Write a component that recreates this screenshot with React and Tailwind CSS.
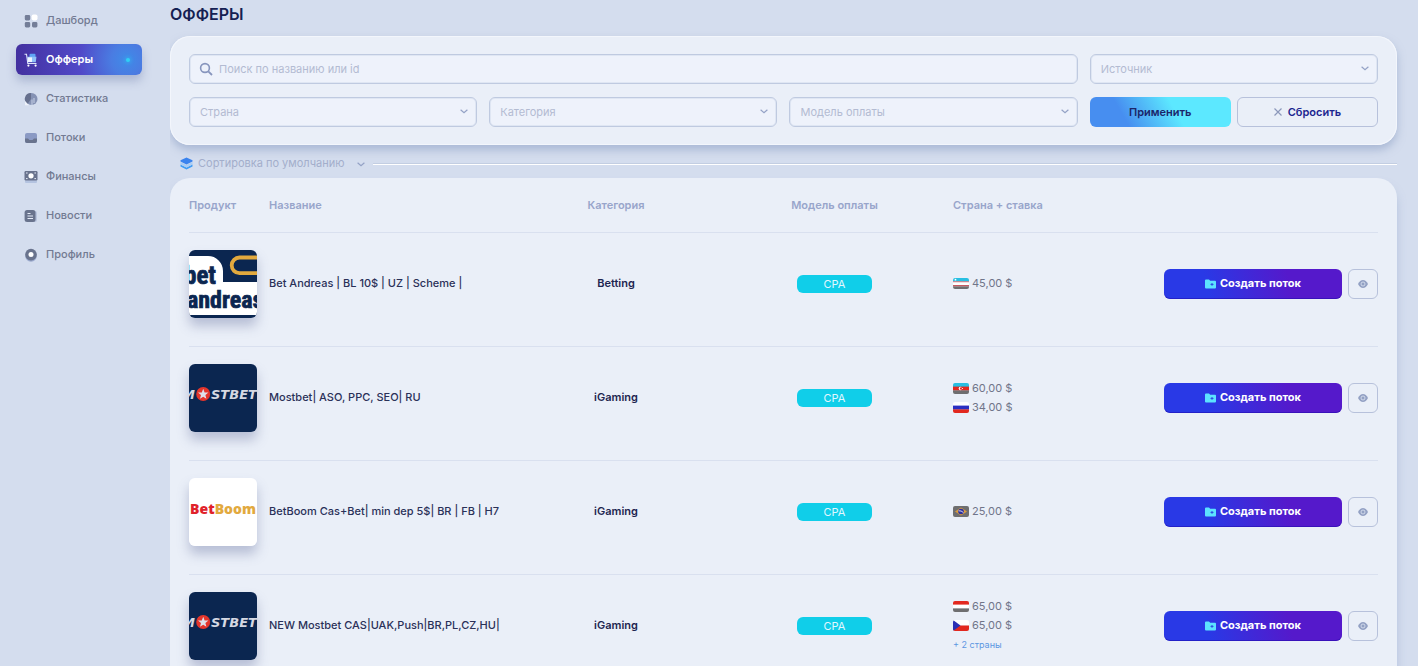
import React, { useState } from "react";

const menu = [
  { id: "dashboard", label: "Дашборд" },
  { id: "offers", label: "Офферы" },
  { id: "stats", label: "Статистика" },
  { id: "flows", label: "Потоки" },
  { id: "finance", label: "Финансы" },
  { id: "news", label: "Новости" },
  { id: "profile", label: "Профиль" },
];

const offers = [
  {
    id: 1,
    logo: "betandreas",
    name: "Bet Andreas | BL 10$ | UZ | Scheme |",
    category: "Betting",
    rates: [{ flag: "uz", price: "45,00 $" }],
  },
  {
    id: 2,
    logo: "mostbet",
    name: "Mostbet| ASO, PPC, SEO| RU",
    category: "iGaming",
    rates: [
      { flag: "az", price: "60,00 $" },
      { flag: "ru", price: "34,00 $" },
    ],
  },
  {
    id: 3,
    logo: "betboom",
    name: "BetBoom Cas+Bet| min dep 5$| BR | FB | H7",
    category: "iGaming",
    rates: [{ flag: "br", price: "25,00 $" }],
  },
  {
    id: 4,
    logo: "mostbet",
    name: "NEW Mostbet CAS|UAK,Push|BR,PL,CZ,HU|",
    category: "iGaming",
    rates: [
      { flag: "hu", price: "65,00 $" },
      { flag: "cz", price: "65,00 $" },
    ],
    more: "+ 2 страны",
  },
];

const MenuIcon = ({ id }) => {
  return (
    <svg viewBox="0 0 14 14" className="w-[14px] h-[14px] shrink-0" aria-hidden="true">
      {id === "dashboard" && (
        <>
          <rect x="0.8" y="1" width="5.4" height="5.4" rx="1.4" fill="#747e98" />
          <rect x="7.6" y="0.5" width="5.9" height="5.9" rx="1.8" fill="#fff" />
          <rect x="0.8" y="8" width="5.4" height="5.4" rx="1.4" fill="#747e98" />
          <rect x="8" y="8" width="5.4" height="5.4" rx="1.4" fill="#747e98" />
        </>
      )}
      {id === "offers" && (
        <>
          <path d="M0.5 1.2h2l1.3 9.3h8.7" fill="none" stroke="#dfe6fb" strokeWidth="1.1" />
          <rect x="5.5" y="0.8" width="6" height="5" rx="1" fill="#5fa4f5" />
          <path d="M3.3 3.8h9.2l-0.7 5.4H4z" fill="#8fc0f8" />
          <rect x="3.6" y="4.4" width="4.4" height="4.6" fill="#eef3ff" />
          <circle cx="4.4" cy="12.6" r="1.1" fill="#fff" />
          <circle cx="11.6" cy="12.6" r="1.1" fill="#fff" />
        </>
      )}
      {id === "stats" && (
        <>
          <circle cx="7.5" cy="7" r="6" fill="#8592b4" />
          <path d="M7 1v6l-3.5 5A6 6 0 0 1 7 1z" fill="#66708e" />
          <path d="M8 7.5V13M10 6v5" stroke="#c8d2e8" strokeWidth="1" />
          <path d="M1 9v4.2h4z" fill="#eef2fa" />
        </>
      )}
      {id === "flows" && (
        <>
          <rect x="1" y="2" width="12" height="10" rx="2" fill="#8b9ac4" />
          <path d="M1 7.5h3l1.5 1.5h3L10 7.5h3V10a2 2 0 0 1-2 2H3a2 2 0 0 1-2-2z" fill="#69738d" />
        </>
      )}
      {id === "finance" && (
        <>
          <rect x="1" y="10" width="12" height="3" rx="1" fill="#b4c3e0" />
          <rect x="0.5" y="1" width="13" height="9.5" rx="1.2" fill="#69738d" />
          <circle cx="7" cy="5.8" r="2.6" fill="#fff" />
          <path d="M2 3h1.6M2 8.6h1.6M10.4 3H12M10.4 8.6H12" stroke="#e6ecf8" strokeWidth="1" />
        </>
      )}
      {id === "news" && (
        <>
          <rect x="3" y="2" width="10" height="11" rx="2" fill="#b9c5de" />
          <rect x="0.6" y="1" width="10.9" height="12" rx="2.5" fill="#69738d" />
          <path d="M3.5 4.5h3M3.5 7h5.5M3.5 9.5h5.5" stroke="#e6ecf8" strokeWidth="1.1" />
        </>
      )}
      {id === "profile" && (
        <>
          <circle cx="7" cy="8" r="5.8" fill="#9aa9cc" />
          <circle cx="7" cy="6.6" r="5.8" fill="#69738d" />
          <circle cx="7" cy="6.4" r="2.5" fill="#fff" />
        </>
      )}
    </svg>
  );
};

const Chevron = ({ className }) => (
  <svg viewBox="0 0 8 5" className={className} aria-hidden="true">
    <path d="M0.6 0.8L4 3.8L7.4 0.8" fill="none" stroke="#94a2c6" strokeWidth="1.2" />
  </svg>
);

const Flag = ({ code }) => {
  return (
    <svg viewBox="0 0 16 11" className="w-4 h-[11px] shrink-0 rounded-xs" aria-hidden="true">
      {code === "uz" && (
        <>
          <rect width="16" height="11" fill="#fff" />
          <rect width="16" height="3.4" fill="#27bfe2" />
          <rect y="3.4" width="16" height="0.8" fill="#d0525a" />
          <rect y="7.2" width="16" height="1.2" fill="#b8323a" />
          <rect y="8.4" width="16" height="2.6" fill="#6e6e70" />
          <circle cx="2.5" cy="1.7" r="0.9" fill="#fff" />
        </>
      )}
      {code === "az" && (
        <>
          <rect width="16" height="4" fill="#27bfe2" />
          <rect y="3.6" width="16" height="4" fill="#e2281f" />
          <rect y="7.4" width="16" height="3.6" fill="#6e6e70" />
          <circle cx="7.4" cy="5.5" r="1.7" fill="#fff" />
          <circle cx="8.1" cy="5.5" r="1.2" fill="#e2281f" />
          <circle cx="9.4" cy="5.5" r="0.6" fill="#fff" />
        </>
      )}
      {code === "ru" && (
        <>
          <rect width="16" height="4" fill="#fff" />
          <rect y="3.6" width="16" height="4" fill="#2a2fc2" />
          <rect y="7.4" width="16" height="3.6" fill="#e2281f" />
        </>
      )}
      {code === "br" && (
        <>
          <rect width="16" height="11" fill="#6e6e70" />
          <path d="M8 1.5L14 5.5L8 9.5L2 5.5z" fill="#d99a3e" />
          <circle cx="8" cy="5.5" r="2.8" fill="#2b2fa0" />
          <path d="M5.6 4.8q2.6-0.4 4.8 1.7" fill="none" stroke="#fff" strokeWidth="0.8" />
        </>
      )}
      {code === "hu" && (
        <>
          <rect width="16" height="4" fill="#e2281f" />
          <rect y="3.6" width="16" height="4" fill="#fff" />
          <rect y="7.4" width="16" height="3.6" fill="#6e6e70" />
        </>
      )}
      {code === "cz" && (
        <>
          <rect width="16" height="5.5" fill="#fff" />
          <rect y="5.5" width="16" height="5.5" fill="#e2281f" />
          <path d="M0 0L7.5 5.5L0 11z" fill="#2a2fb4" />
        </>
      )}
    </svg>
  );
};

const Logo = ({ type }) => {
  return (
    <svg
      viewBox="0 0 68 68"
      className="block w-[68px] h-[68px] rounded-md shadow-[0_8px_12px_rgba(90,100,150,0.35)]"
      aria-hidden="true"
    >
      {type === "betandreas" && (
        <>
          <rect width="68" height="68" fill="#0b2650" />
          <path d="M0 6h19a15 15 0 0 1 15 15v11h34v33H0z" fill="#fff" />
          <path d="M70 7.5H50.5a7.8 7.8 0 0 0 0 15.6H70" fill="none" stroke="#e2a93e" strokeWidth="3.8" />
          <g fill="#0b2650" stroke="#0b2650" strokeWidth="0.7" fontWeight="700" fontFamily="'Roboto Condensed', 'Liberation Sans Narrow', 'Liberation Sans', sans-serif">
            <text x="-5" y="34" fontSize="25">bet</text>
            <text x="-2" y="58" fontSize="24">andreas</text>
          </g>
        </>
      )}
      {type === "mostbet" && (
        <>
          <rect width="68" height="68" fill="#0b2650" />
          <g fill="#d5d8e2" fontWeight="700" fontStyle="italic" fontSize="13" fontFamily="'DejaVu Sans', sans-serif">
            <text x="-7" y="35">M</text>
            <text x="22" y="35">STBET</text>
          </g>
          <circle cx="14.2" cy="30" r="7" fill="#e5352b" />
          <path d="M14.2 24.8l1.4 3.6 3.8 0.2-3 2.4 1 3.8-3.2-2.1-3.2 2.1 1-3.8-3-2.4 3.8-0.2z" fill="#dfe1ea" />
        </>
      )}
      {type === "betboom" && (
        <>
          <rect width="68" height="68" fill="#fff" />
          <text x="34" y="36" textAnchor="middle" fontSize="14" fontWeight="800" fontFamily="'Open Sans', sans-serif">
            <tspan fill="#e0222a">Bet</tspan>
            <tspan fill="#e2a93e">Boom</tspan>
          </text>
        </>
      )}
    </svg>
  );
};

const FilterSelect = ({ label }) => {
  return (
    <div className="relative">
      <select
        aria-label={label}
        className="block w-full h-[30px] appearance-none rounded-md border border-[#bfcae0] shadow-[inset_0_0_0_1px_#dfe6f3] bg-[#eef2fb] pl-[10px] pr-8 text-[11px] text-[#b3bbd2] outline-none"
      >
        <option>{label}</option>
      </select>
      <Chevron className="absolute right-[9px] top-3 w-2 h-[5px] pointer-events-none" />
    </div>
  );
};

const Sidebar = () => {
  const [active, setActive] = useState("offers");
  return (
    <nav className="w-[170px] shrink-0 pl-4 pr-7 pt-[5px] flex flex-col gap-2">
      {menu.map((item) => (
        <a
          key={item.id}
          href={`#${item.id}`}
          onClick={() => setActive(item.id)}
          className={
            active === item.id
              ? "flex items-center gap-2 h-[31px] pl-2 pr-3 rounded-md text-[11px] font-semibold text-white bg-[radial-gradient(circle_at_88%_50%,#3f8be8_0%,#4a7ce2_14%,#5149c8_42%,#43309f_100%)] shadow-[0_6px_10px_rgba(110,125,170,0.4)]"
              : "flex items-center gap-2 h-[31px] pl-2 pr-3 rounded-md text-[11px] font-medium text-[#727a92]"
          }
        >
          <MenuIcon id={item.id} />
          <span className="flex-grow">{item.label}</span>
          {active === item.id && (
            <span className="w-1 h-1 rounded-full bg-[#2fd0f5] shadow-[0_0_4px_#2fd0f5]" />
          )}
        </a>
      ))}
    </nav>
  );
};

const Filters = () => {
  const [search, setSearch] = useState("");
  return (
    <form
      onSubmit={(e) => e.preventDefault()}
      className="grid grid-cols-4 gap-x-3 gap-y-[13px] px-[19px] py-[18px] rounded-[20px] bg-[#eaeff8] shadow-[inset_0_0_0_1px_#f3f6fc,0_5px_9px_rgba(130,150,190,0.5)]"
    >
      <div className="relative col-span-3">
        <svg viewBox="0 0 14 14" className="absolute left-[10px] top-2 w-[14px] h-[14px]" aria-hidden="true">
          <circle cx="6" cy="6" r="4.4" fill="none" stroke="#8795bd" strokeWidth="1.6" />
          <path d="M9.3 9.3L13 13" stroke="#8795bd" strokeWidth="1.8" />
        </svg>
        <input
          type="text"
          aria-label="Поиск"
          placeholder="Поиск по названию или id"
          value={search}
          onChange={(e) => setSearch(e.target.value)}
          className="block w-full h-[30px] rounded-md border border-[#bfcae0] shadow-[inset_0_0_0_1px_#dfe6f3] bg-[#eef2fb] pl-[29px] pr-3 text-[11px] text-[#727a92] placeholder:text-[#b3bbd2] outline-none"
        />
      </div>
      <FilterSelect label="Источник" />
      <FilterSelect label="Страна" />
      <FilterSelect label="Категория" />
      <FilterSelect label="Модель оплаты" />
      <div className="grid grid-cols-2 gap-[6px]">
        <button
          type="submit"
          className="h-[30px] rounded-md text-[11px] font-semibold text-[#1b2569] bg-[linear-gradient(60deg,#478ef0_25%,#5ce8ff_60%)]"
        >
          Применить
        </button>
        <button
          type="reset"
          onClick={() => setSearch("")}
          className="h-[30px] rounded-md border border-[#b7c1db] text-[11px] font-semibold text-[#1c2590] flex items-center justify-center gap-[6px]"
        >
          <svg viewBox="0 0 8 8" className="w-2 h-2" aria-hidden="true">
            <path d="M0.5 0.5L7.5 7.5M7.5 0.5L0.5 7.5" stroke="#8c98ba" strokeWidth="1.2" />
          </svg>
          Сбросить
        </button>
      </div>
    </form>
  );
};

const SortRow = () => {
  return (
    <div className="flex items-center h-[33px] pt-1 pl-[10px]">
      <svg viewBox="0 0 13 13" className="w-[13px] h-[13px] shrink-0" aria-hidden="true">
        <path d="M0.5 7.5v2l6 3 6-3v-2l-6 3z" fill="#3f9df5" />
        <path d="M0.5 5l6 3 6-3v2.6l-6 3-6-3z" fill="#a9cdf5" />
        <path d="M0.5 3.2l6-2.7 6 2.7v1.4l-6 2.8-6-2.8z" fill="#3a83ee" />
      </svg>
      <div className="relative">
        <select
          aria-label="Сортировка"
          className="block h-5 appearance-none bg-transparent pl-[5px] pr-7 text-[11px] text-[#a3aecb] outline-none"
        >
          <option>Сортировка по умолчанию</option>
        </select>
        <Chevron className="absolute right-2 top-2 w-2 h-[5px] pointer-events-none" />
      </div>
      <hr className="flex-grow h-[2px] border-0 border-t border-[#c3cee2] bg-white" />
    </div>
  );
};

const OffersTable = () => {
  return (
    <div className="px-[19px] rounded-t-[20px] bg-[#eaeff8] shadow-[0_8px_8px_rgba(150,168,205,0.5)]">
      <table className="w-full table-fixed text-left text-[11px]">
        <thead>
          <tr className="h-[54px] text-[#98a5cb] border-b border-[#d9e0ef] shadow-[0_1px_0_#f4f7fc]">
            <th className="w-[80px] font-semibold">Продукт</th>
            <th className="w-[247px] font-semibold">Название</th>
            <th className="w-[200px] font-semibold text-center">Категория</th>
            <th className="w-[237px] font-semibold text-center">Модель оплаты</th>
            <th className="font-semibold">Страна + ставка</th>
            <th className="w-[214px]" aria-label="Действия"></th>
          </tr>
        </thead>
        <tbody>
          {offers.map((offer) => (
            <tr key={offer.id} className="border-b border-[#d9e0ef] shadow-[0_1px_0_#f4f7fc]">
              <td className="pt-[17px] pb-7">
                <Logo type={offer.logo} />
              </td>
              <td className="pt-[17px] pb-7 font-medium text-[#2a3158] whitespace-nowrap">{offer.name}</td>
              <td className="pt-[17px] pb-7 text-center font-semibold text-[#1d2550]">{offer.category}</td>
              <td className="pt-[17px] pb-7">
                <div className="mx-auto w-[75px] h-[18px] rounded-md bg-[#10cee9] text-center leading-[18px] text-[#e2f7ff]">
                  CPA
                </div>
              </td>
              <td className="pt-[17px] pb-7 text-[#70758a]">
                {offer.rates.map((rate) => (
                  <div key={rate.flag} className="flex items-center gap-[3px] h-[19px]">
                    <Flag code={rate.flag} />
                    <span>{rate.price}</span>
                  </div>
                ))}
                {offer.more && (
                  <a href="#countries" className="block h-[19px] leading-[19px] text-[9px] text-[#5d97e2]">
                    {offer.more}
                  </a>
                )}
              </td>
              <td className="pt-[17px] pb-7">
                <div className="flex gap-[6px]">
                  <button className="flex-grow h-[30px] rounded-md flex items-center justify-center gap-1 font-bold text-white bg-[linear-gradient(75deg,#2939e6_25%,#5519cb_70%)] shadow-[inset_0_-1px_0_rgba(30,10,170,0.5)]">
                    <svg viewBox="0 0 11 10" className="w-[11px] h-[10px]" aria-hidden="true">
                      <path d="M0 1.5Q0 0.5 1 0.5h3l1.2 1.3H10q1 0 1 1V8.5q0 1-1 1H1q-1 0-1-1z" fill="#5ce3ff" />
                      <path d="M5.5 5.4h3M7 4v2.8" stroke="#2b3be0" strokeWidth="0.9" />
                    </svg>
                    Создать поток
                  </button>
                  <button
                    aria-label="Просмотр"
                    className="w-[30px] h-[30px] rounded-md border border-[#b7c1db] flex items-center justify-center"
                  >
                    <svg viewBox="0 0 10 8" className="w-[10px] h-2" aria-hidden="true">
                      <path d="M0 4Q2 0 5 0T10 4Q8 8 5 8T0 4z" fill="#93a1c4" />
                      <circle cx="5" cy="4" r="2" fill="none" stroke="#dde4f2" strokeWidth="0.8" />
                    </svg>
                  </button>
                </div>
              </td>
            </tr>
          ))}
        </tbody>
      </table>
    </div>
  );
};

const App = () => {
  return (
    <div className="h-screen overflow-hidden flex bg-[#d4ddee] font-[Inter,'Noto_Sans',sans-serif]">
      <Sidebar />
      <main className="flex-grow min-w-0 pr-[21px] overflow-y-auto [scrollbar-width:none]">
        <h1 className="h-9 pt-1 text-[16px] leading-5 font-semibold text-[#152052]">ОФФЕРЫ</h1>
        <Filters />
        <SortRow />
        <OffersTable />
      </main>
    </div>
  );
};

export default App;
